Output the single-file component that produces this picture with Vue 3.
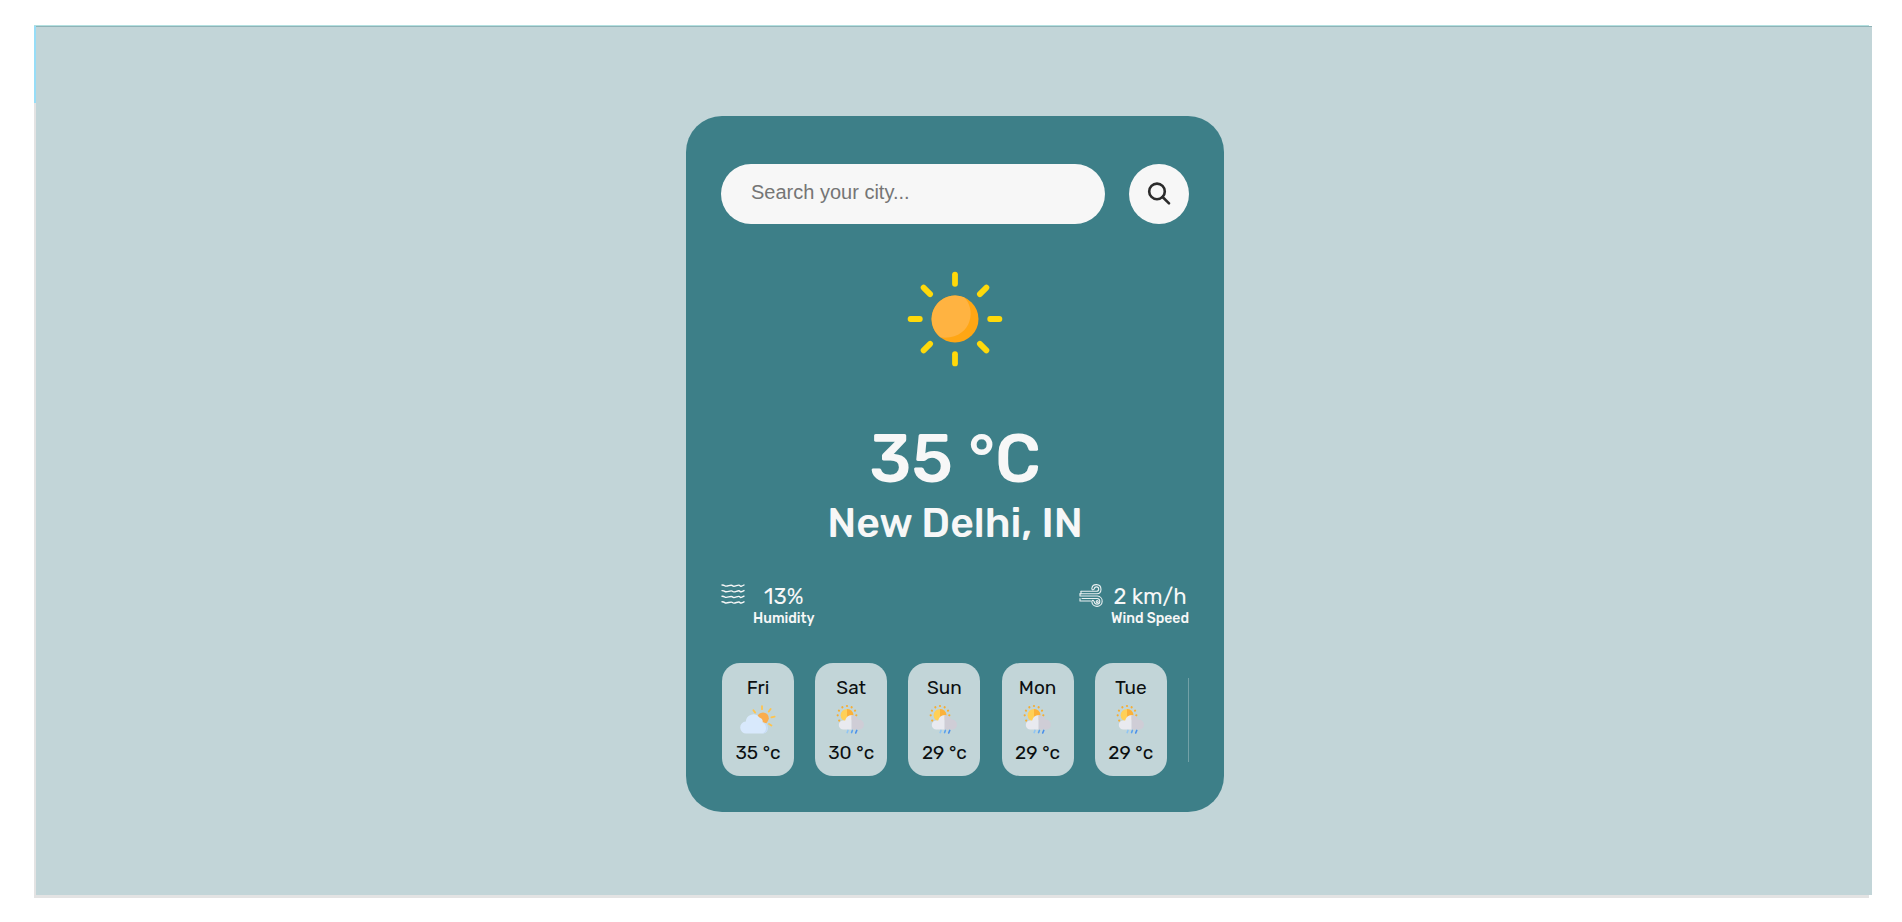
<script setup>
import { ref } from 'vue'

const city = ref('')
const forecast = [
  { day: 'Fri', temp: 35, icon: 'cloudy' },
  { day: 'Sat', temp: 30, icon: 'rain' },
  { day: 'Sun', temp: 29, icon: 'rain' },
  { day: 'Mon', temp: 29, icon: 'rain' },
  { day: 'Tue', temp: 29, icon: 'rain' },
]
const rays = [0, 45, 90, 135, 180, 225, 270, 315]
const dots = [-180, -150, -120, -90, -60, -30, 0]
</script>

<template>
  <div class="frame">
    <main class="page">
      <section class="card">
        <form class="search" @submit.prevent>
          <input v-model="city" type="text" placeholder="Search your city..." aria-label="City" />
          <button type="submit" aria-label="Search">
            <svg viewBox="0 0 24 24" width="24" height="24" fill="none" stroke="#2b2b2b" stroke-width="2.6">
              <circle cx="10" cy="9.4" r="7.8" />
              <path d="M15.6 15 22 21.4" stroke-linecap="round" />
            </svg>
          </button>
        </form>

        <svg class="sun" viewBox="-48 -48 96 96" aria-hidden="true">
          <path
            v-for="r in rays"
            :key="r"
            d="M0-44.4V-35.2"
            :transform="`rotate(${r})`"
            stroke="#ffd90a"
            stroke-width="5.8"
            stroke-linecap="round"
          />
          <circle r="23.5" fill="#ffa614" />
          <path d="M-14.8 18.2A23.5 23.5 0 0 1 9-21.7C21-11 18 18-10 18.8Z" fill="#ffb341" />
        </svg>

        <h1>35 °C</h1>
        <h2>New Delhi, IN</h2>

        <div class="details">
          <div class="detail">
            <svg width="24" height="22" viewBox="0 0 24 22" fill="none" stroke="#f7f7f7" stroke-width="1.4" stroke-linecap="round">
              <path
                v-for="y in [2, 7.6, 13.2, 18.8]"
                :key="y"
                :d="`M1 ${y - 1}q1.8 0 2.8.8t4-.1 3.8.1 3.8-.1 3.6.1 4-.8`"
              />
            </svg>
            <div class="reading">
              <p class="value">13%</p>
              <p class="label">Humidity</p>
            </div>
          </div>
          <div class="detail">
            <svg width="24" height="24" viewBox="0 0 24 24" fill="none" stroke="#e9f0f1" stroke-width="1.1" stroke-linecap="round">
              <path d="M2 7.3h15.5a2.2 2.2 0 1 0-2.2-2.3M1 9.8h17a4.6 4.6 0 1 0-5.2-5.2c0 1.2 1 1.4 1.6.8" />
              <path d="M1 12h17.5a5.2 5.2 0 1 1-5.7 5.6c0-1.3 1.2-1.6 1.8-.8M3 14.5h15.2a2.8 2.8 0 1 1-3 3M1 17h10.5M2 7.3v2.5M1 9.8v2.2M1 14.5v2.5" />
              <circle cx="18.2" cy="17.5" r="1" />
            </svg>
            <div class="reading">
              <p class="value">2 km/h</p>
              <p class="label">Wind Speed</p>
            </div>
          </div>
        </div>

        <ul class="forecast">
          <li v-for="f in forecast" :key="f.day">
            <span>{{ f.day }}</span>
            <svg v-if="f.icon === 'cloudy'" viewBox="0 0 38 32" width="38" height="32">
              <g stroke="#ffc44d" stroke-width="1.8" stroke-linecap="round">
                <path d="M23 2.2V5.2M31.6 5 29.8 7.6M35.6 12.6 32.4 13.4M32.4 21.6 30 20M14.4 6.2 16.2 8.6" />
              </g>
              <circle cx="24" cy="14.2" r="5.8" fill="#faad4d" />
              <path d="M7.4 29.4a5.9 5.9 0 0 1-.6-11.8 7.6 7.6 0 0 1 13.7-4.2 4.6 4.6 0 0 1 3.2 4.8 6 6 0 0 1 5 6c0 3-2.1 5.2-4.7 5.2Z" fill="#d8e9fc" />
              <path d="M22 29.4c3.4 0 4.7-1.8 5-5.1.1-2.2-1-4.6-3.3-6.1a6 6 0 0 1 5 6c0 3-2.1 5.2-4.7 5.2Z" fill="#c7dcf4" />
            </svg>
            <svg v-else viewBox="0 0 38 32" width="38" height="32">
              <g fill="#f5ad32">
                <circle
                  v-for="d in dots"
                  :key="d"
                  cx="9.3"
                  cy="0"
                  r="1.1"
                  :transform="`translate(15 11.3) rotate(${d})`"
                />
                <circle cx="7.2" cy="16.6" r="1.1" />
              </g>
              <circle cx="15" cy="11.3" r="6.4" fill="#ffd057" />
              <path d="M15 4.9a6.4 6.4 0 0 1 0 12.8Z" fill="#fbb13a" />
              <path d="M11.4 25.6a4.6 4.6 0 0 1 0-9.2q1-.1 1.8.2a7.2 7.2 0 0 1 6.6-5.6V25.6Z" fill="#e9eaf0" />
              <path d="M19.6 11a7.6 7.6 0 0 1 6.8 4.5c3 0 5.5 2.2 5.5 5.2 0 2.8-2.2 4.9-5 4.9H19.6Z" fill="#cfcdd6" />
              <g stroke-width="1.6" stroke-linecap="round">
                <path d="M16 26.4 15.2 28.6" stroke="#8fc5f5" />
                <path d="M20.4 26.4 19.6 28.6" stroke="#5aa2ef" />
                <path d="M24.8 26.4 23.7 29" stroke="#4a90ea" />
              </g>
            </svg>
            <span>{{ f.temp }} °c</span>
          </li>
          <li class="next" aria-hidden="true"></li>
        </ul>
      </section>
    </main>
  </div>
</template>

<style>
body {
  background: #fff;
}
</style>

<style scoped>
* {
  box-sizing: border-box;
  margin: 0;
  padding: 0;
}
.frame {
  margin: 25px 30px 24px 34px;
  min-height: calc(100vh - 49px);
  padding: 2px 0 3px 2px;
  display: flex;
  background:
    linear-gradient(#8fb3b7, #8fb3b7) 2px 1px / 100% 1px no-repeat,
    linear-gradient(#b3e0e0, #b3e0e0) 0 0 / calc(100% - 3px) 1px no-repeat,
    linear-gradient(#97ddf7, #97ddf7) 0 0 / 2px 78px no-repeat,
    linear-gradient(#e3e3e3, #e3e3e3) 0 0 / 2px 100% no-repeat,
    linear-gradient(#e3e3e3, #e3e3e3) 0 100% / calc(100% - 3px) 3px no-repeat;
}
.page {
  flex: 1;
  display: flex;
  justify-content: center;
  align-items: flex-start;
  padding: 89px 0 80px 2px;
  background: #c2d5d8;
  font-family: Rubik, Inter, sans-serif;
}
.card {
  width: 90%;
  max-width: 538px;
  padding: 48px 35px 36px;
  border-radius: 36px;
  background: #3d7f88;
  color: #f7f7f7;
  text-align: center;
}
.search {
  display: flex;
  justify-content: space-between;
  gap: 24px;
}
.search input {
  flex: 1;
  min-width: 0;
  height: 60px;
  padding: 0 30px 4px;
  border: 0;
  outline: 0;
  border-radius: 30px;
  background: #f7f7f7;
  color: #555;
  font: 20px "Liberation Sans", Arial, sans-serif;
}
.search input::placeholder {
  color: #757575;
}
.search button {
  display: grid;
  place-items: center;
  width: 60px;
  height: 60px;
  border: 0;
  border-radius: 50%;
  background: #f7f7f7;
}
.sun {
  display: block;
  width: 96px;
  height: 96px;
  margin: 47px auto 0;
}
h1 {
  margin-top: 52px;
  font-size: 67px;
  font-weight: 500;
  line-height: 80px;
}
h2 {
  font-size: 41px;
  font-weight: 500;
  line-height: 48px;
}
.details {
  display: flex;
  justify-content: space-between;
  margin-top: 37px;
}
.detail {
  display: flex;
  gap: 8px;
}
.value {
  font-size: 22px;
  line-height: 26px;
}
.label {
  font-size: 14px;
  font-weight: 500;
  line-height: 18px;
}
.forecast {
  display: flex;
  justify-content: space-between;
  align-items: center;
  margin: 35px 0 0 1px;
  list-style: none;
}
.forecast li {
  flex: 0 0 72px;
  display: flex;
  flex-direction: column;
  align-items: center;
  gap: 4px;
  height: 113px;
  padding-top: 12px;
  border-radius: 18px;
  background: #c2d5d8;
  color: #0b0f10;
  font-size: 19px;
  line-height: 25px;
}
.forecast .next {
  flex-basis: 1px;
  height: 84px;
  border-radius: 0;
  opacity: 0.4;
}
</style>
